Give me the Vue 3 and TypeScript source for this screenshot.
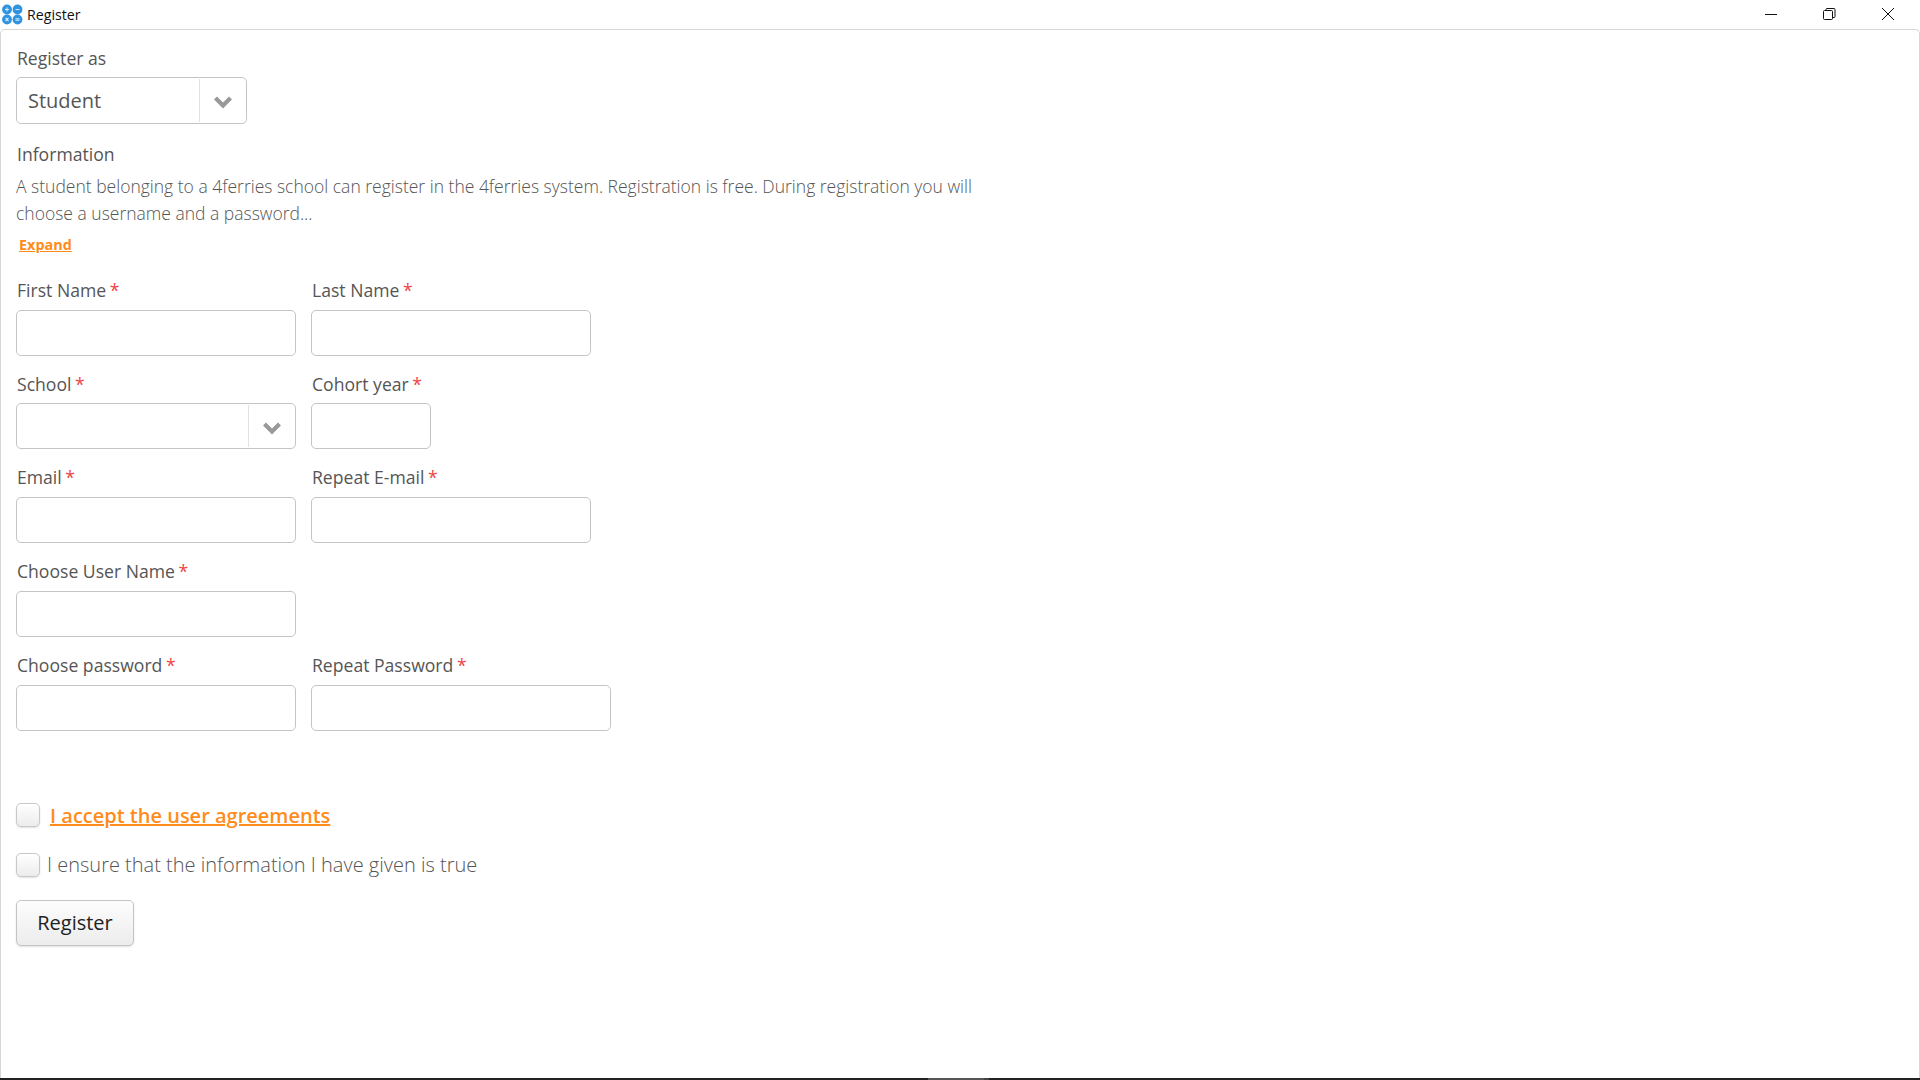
<script setup lang="ts">
const rows = [
  { fields: [ { label: 'First Name', w: 'wide' }, { label: 'Last Name', w: 'wide' } ] },
  { fields: [ { label: 'School', w: 'wide', select: true }, { label: 'Cohort year', w: 'small' } ] },
  { fields: [ { label: 'Email', w: 'wide' }, { label: 'Repeat E-mail', w: 'wide' } ] },
  { fields: [ { label: 'Choose User Name', w: 'wide' } ] },
  { fields: [ { label: 'Choose password', w: 'wide' }, { label: 'Repeat Password', w: 'large' } ] },
]
</script>

<template>
  <div class="window">
    <header class="titlebar">
      <div class="title">
        <svg class="logo" width="22" height="22" viewBox="0 0 22 22">
          <circle cx="6" cy="6.500" r="4.900" fill="#2f94e0" />
          <circle cx="16.500" cy="6.500" r="4.900" fill="#2f94e0" />
          <circle cx="6" cy="16.500" r="4.900" fill="#2f94e0" />
          <circle cx="16.500" cy="16.500" r="4.900" fill="#2f94e0" />
          <path d="M4 6.500h4M6 4.500v4M14.500 6.500h4M4.500 15l3 3M7.500 15l-3 3M14.500 15.700h4M14.500 17.300h4" stroke="#d4e9f9" stroke-width="1.100" fill="none" />
        </svg>
        <span>Register</span>
      </div>
      <div class="controls">
        <span class="ctl">
          <svg width="14" height="14" viewBox="0 0 14 14"><path d="M1 7.500h12" stroke="#111" stroke-width="1" /></svg>
        </span>
        <span class="ctl">
          <svg width="14" height="14" viewBox="0 0 14 14" fill="none" stroke="#111" stroke-width="1">
            <rect x="1.500" y="3.500" width="9" height="9" rx="1" />
            <path d="M4 3.500V2.500a1 1 0 0 1 1-1h7a1 1 0 0 1 1 1v7a1 1 0 0 1-1 1h-1.500" />
          </svg>
        </span>
        <span class="ctl">
          <svg width="14" height="14" viewBox="0 0 14 14"><path d="M1 1l12 12M13 1L1 13" stroke="#111" stroke-width="1" /></svg>
        </span>
      </div>
    </header>

    <main class="panel">
      <label class="lbl first">Register as</label>
      <div class="select role">
        <span class="value">Student</span>
        <span class="arrow">
          <svg width="20" height="14" viewBox="0 0 20 14"><path d="M2.500 3l7.500 7.500L17.500 3" fill="none" stroke="#999" stroke-width="4.200" /></svg>
        </span>
      </div>

      <div class="lbl info-title">Information</div>
      <p class="info">A student belonging to a 4ferries school can register in the 4ferries system. Registration is free. During registration you will choose a username and a password...</p>
      <a class="expand">Expand</a>

      <div class="form">
        <div v-for="(row, i) in rows" :key="i" class="row">
          <div v-for="f in row.fields" :key="f.label" class="field" :class="f.w">
            <label class="lbl">{{ f.label }} <span class="req">*</span></label>
            <div v-if="f.select" class="select">
              <span class="value"></span>
              <span class="arrow">
                <svg width="20" height="14" viewBox="0 0 20 14"><path d="M2.500 3l7.500 7.500L17.500 3" fill="none" stroke="#999" stroke-width="4.200" /></svg>
              </span>
            </div>
            <input v-else class="input" type="text" />
          </div>
        </div>
      </div>

      <div class="check one">
        <span class="box"></span>
        <a class="agree">I accept the user agreements</a>
      </div>
      <div class="check two">
        <span class="box"></span>
        <span class="ensure">I ensure that the information I have given is true</span>
      </div>
      <button class="btn" type="button">Register</button>
    </main>

    <footer class="taskbar"><span class="seg a"></span><span class="seg b"></span></footer>
  </div>
</template>

<style>
html, body { margin: 0; background: #fff; overflow: hidden; }
</style>

<style scoped>
.window {
  width: 1920px;
  height: 1080px;
  display: flex;
  flex-direction: column;
  background: #fff;
  font-family: "Open Sans", sans-serif;
  color: #555;
}
.titlebar {
  height: 29px;
  flex: none;
  display: flex;
  justify-content: space-between;
  align-items: center;
}
.title {
  display: flex;
  align-items: center;
  font-size: 14.2px;
  color: #111;
  padding-left: 1px;
  gap: 4px;
  margin-top: -1px;
}
.controls { display: flex; padding-right: 3px; margin-top: -2px; }
.ctl { width: 58.5px; display: flex; justify-content: center; }
.panel {
  flex: 1;
  min-height: 0;
  border: 1px solid #d6d6d6;
  border-bottom: none;
  border-radius: 5px 5px 0 0;
  padding: 0 0 0 15px;
  box-sizing: border-box;
  display: flex;
  flex-direction: column;
  align-items: flex-start;
}
.lbl {
  display: block;
  font-size: 17.6px;
  line-height: 24px;
  color: #555;
  margin-left: 1px;
}
.first { margin-top: 16px; margin-bottom: 7px; }
.select {
  box-sizing: border-box;
  display: flex;
  height: 46px;
  border: 1px solid #c4c4c4;
  border-radius: 5px;
  background: #fff;
}
.role { width: 231px; height: 47px; }
.value {
  flex: 1;
  font-size: 20px;
  line-height: 46px;
  padding-left: 11px;
  color: #555;
}
.arrow {
  width: 47px;
  margin: 1px 0;
  border-left: 1px solid #e2e2e2;
  display: flex;
  align-items: center;
  justify-content: center;
  padding-top: 3px;
  box-sizing: border-box;
}
.info-title { margin-top: 18px; }
.info {
  margin: 7px 0 0;
  width: 990px;
  font-size: 17.5px;
  font-weight: 300;
  line-height: 27px;
  color: #555;
}
.expand {
  margin: 8px 0 0 3px;
  font-size: 14.4px;
  line-height: 20px;
  font-weight: 700;
  color: #ff8c1a;
  text-decoration: underline;
}
.form { margin-top: 23px; display: flex; flex-direction: column; gap: 16.05px; }
.row { display: flex; gap: 15px; }
.field { display: flex; flex-direction: column; gap: 7.7px; }
.wide { width: 280px; }
.small { width: 120px; }
.large { width: 300px; }
.req { color: #f04444; margin-left: -1px; }
.input {
  box-sizing: border-box;
  width: 100%;
  height: 46px;
  border: 1px solid #c4c4c4;
  border-radius: 5px;
  background: #fff;
  padding: 0;
  outline: none;
}
.check { display: flex; align-items: center; }
.one { margin-top: 72.300px; gap: 10px; }
.two { margin-top: 25.400px; gap: 7px; }
.box {
  box-sizing: border-box;
  width: 24px;
  height: 24px;
  border: 1px solid #c8c8c8;
  border-radius: 5px;
  background: linear-gradient(#fff, #ececec);
  box-shadow: 0 1px 2px rgba(0, 0, 0, 0.12);
}
.agree {
  font-size: 20px;
  font-weight: 600;
  line-height: 24px;
  color: #ff8c1a;
  text-decoration: underline;
  padding-top: 1px;
}
.ensure { font-size: 20px; font-weight: 300; line-height: 24px; color: #555; }
.btn {
  margin: 22.600px 0 0;
  width: 118px;
  height: 46px;
  box-sizing: border-box;
  border: 1px solid #c4c4c4;
  border-radius: 5px;
  background: linear-gradient(#fdfdfd, #ececec);
  box-shadow: 0 1px 2px rgba(0, 0, 0, 0.12);
  font-family: inherit;
  font-size: 20px;
  color: #222;
  padding: 0;
}
.taskbar {
  height: 2px;
  flex: none;
  background: #222;
  display: flex;
  padding-left: 928px;
}
.seg.a { width: 56px; background: #555; }
.seg.b { width: 5px; background: #444; }
</style>
